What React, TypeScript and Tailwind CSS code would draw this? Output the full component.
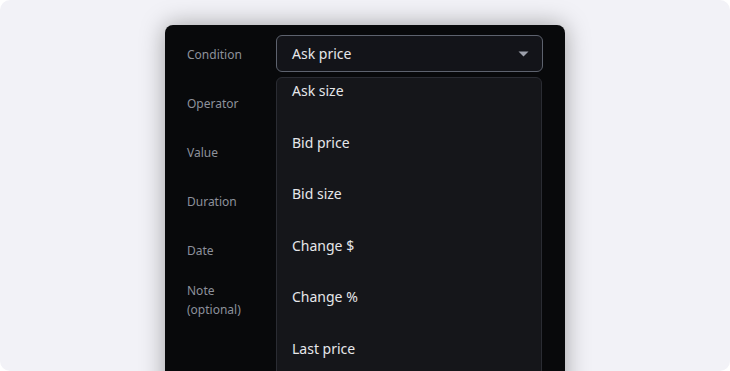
const labels = ['Condition', 'Operator', 'Value', 'Duration'];
const options = ['Ask size', 'Bid price', 'Bid size', 'Change $', 'Change %', 'Last price'];

export default function App() {
  return (
    <div className="h-[371px] w-[730px] bg-white" style={{ fontFamily: '"Noto Sans", "Open Sans", sans-serif' }}>
      <div className="flex h-full w-full justify-center overflow-hidden rounded-[10px] bg-[#f2f2f7] pt-[25px]">
        <div className="relative flex h-[400px] w-[400px] rounded-t-[8px] bg-[#08090b] shadow-[0_0_24px_rgba(0,0,0,0.35)]">
          {/* Labels column */}
          <div className="flex w-[111px] flex-col pl-[22px] pt-[20px] text-[12px] leading-[19px] text-[#8d919b]">
            {labels.map((l) => (
              <div key={l} className="h-[49px]">
                {l}
              </div>
            ))}
            <div className="h-[40px]">Date</div>
            <div>
              Note
              <br />
              (optional)
            </div>
          </div>

          {/* Select */}
          <div className="pt-[10px]">
            <div className="flex h-[37px] w-[267px] items-center justify-between rounded-[6px] border border-[#5d626e] bg-[#131419] pl-[15px] pr-[13px] text-[14px] text-[#e6e7ea]">
              <span>Ask price</span>
              <svg width="11" height="6" viewBox="0 0 11 6">
                <path d="M0.5 0.5 L10.5 0.5 L5.5 5.5 Z" fill="#9ca0ab" />
              </svg>
            </div>
          </div>

          {/* Dropdown */}
          <div className="absolute left-[111px] top-[52px] h-[320px] w-[266px] overflow-hidden rounded-t-[6px] border border-[#2a2c33] bg-[#15161a]">
            <div className="-mt-[13px]">
              {options.map((o) => (
                <div key={o} className="flex h-[51.5px] items-center pl-[15px] text-[14px] text-[#e6e7ea]">
                  {o}
                </div>
              ))}
            </div>
          </div>
        </div>
      </div>
    </div>
  );
}
